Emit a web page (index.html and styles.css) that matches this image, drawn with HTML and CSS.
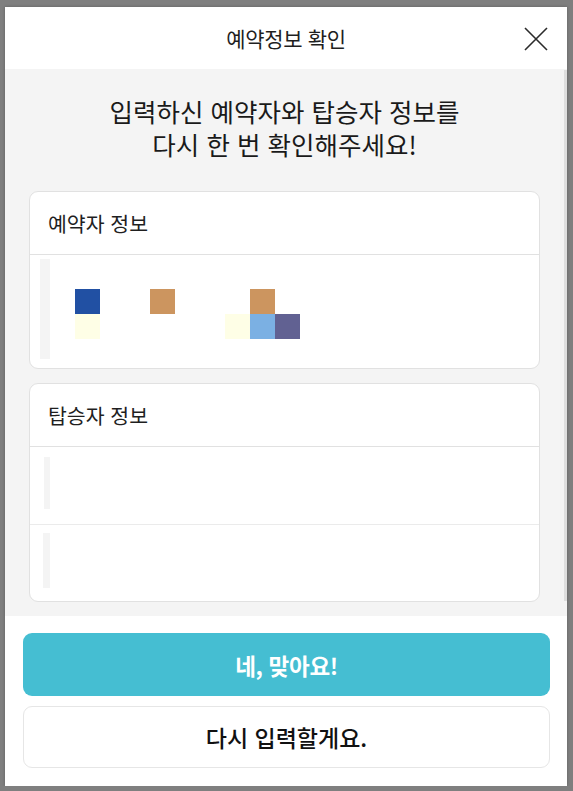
FILE: index.html
```html
<!DOCTYPE html>
<html lang="ko">
<head>
  <meta charset="utf-8">
  <link rel="stylesheet" href="styles.css">
</head>
<body>
  <div class="modal">
    <div class="modal-header">
      <h1>예약정보 확인</h1>
      <button class="close-btn" aria-label="닫기">
        <svg width="24" height="24" viewBox="0 0 24 24">
          <path d="M1 1 L23 23 M23 1 L1 23" stroke="#2b2b2b" stroke-width="1.6" fill="none"/>
        </svg>
      </button>
    </div>

    <div class="modal-body">
      <div class="scroll-area">
        <p class="notice">
          <span>입력하신 예약자와 탑승자 정보를</span>
          <span>다시 한 번 확인해주세요!</span>
        </p>

        <div class="card">
          <div class="card-title">예약자 정보</div>
          <div class="card-row booker">
            <span class="skeleton tall"></span>
            <div class="pixels">
              <i class="px blue"></i><i></i><i></i><i class="px tan"></i><i></i><i></i><i></i><i class="px tan"></i><i></i>
              <i class="px cream"></i><i></i><i></i><i></i><i></i><i></i><i class="px cream"></i><i class="px sky"></i><i class="px violet"></i>
            </div>
          </div>
        </div>

        <div class="card">
          <div class="card-title">탑승자 정보</div>
          <div class="card-row passenger">
            <span class="skeleton thin"></span>
          </div>
          <div class="card-row passenger second">
            <span class="skeleton thin wide"></span>
          </div>
        </div>
      </div>
      <div class="scrollbar"><span class="thumb"></span></div>
    </div>

    <div class="modal-footer">
      <button class="btn primary">네, 맞아요!</button>
      <button class="btn secondary">다시 입력할게요.</button>
    </div>
  </div>
</body>
</html>
```

FILE: styles.css
```css
:root {
  --overlay: #7f7f7f;
  --text: #1f1f1f;
  --panel-bg: #f4f4f4;
  --border: #e1e1e1;
  --accent: #45bed2;
}

* {
  box-sizing: border-box;
}

body {
  margin: 0;
  background-color: var(--overlay);
  font-family: "Noto Sans CJK KR", "Noto Sans", sans-serif;
  color: var(--text);
}

.modal {
  width: 562px;
  height: 779px;
  margin: 7px 0 0 5px;
  background: #fff;
  display: flex;
  flex-direction: column;
  box-shadow: 0 0 3px rgba(0, 0, 0, 0.25);
}

.modal-header {
  height: 62px;
  flex: none;
  display: flex;
  align-items: center;
  justify-content: center;
  position: relative;
}

.modal-header h1 {
  margin: 0;
  font-size: 21px;
  font-weight: 400;
  letter-spacing: -0.3px;
}

.close-btn {
  position: absolute;
  right: 19px;
  top: 20px;
  padding: 0;
  border: none;
  background: none;
  width: 24px;
  height: 24px;
  cursor: pointer;
}

.close-btn svg {
  display: block;
}

.modal-body {
  flex: 1;
  display: flex;
  background-color: var(--panel-bg);
  min-height: 0;
}

.scroll-area {
  flex: 1;
  padding: 0 24px 13px 24px;
  display: flex;
  flex-direction: column;
  gap: 14px;
}

.scrollbar {
  width: 3px;
  padding: 1px 0 15px;
}

.scrollbar .thumb {
  display: block;
  height: 100%;
  background-color: #dedede;
}

.notice {
  margin: 25px 0 17px;
  text-align: center;
  font-size: 25.5px;
  font-weight: 400;
  line-height: 33px;
  color: #1a1a1a;
}

.notice span {
  display: block;
}

.card {
  background: #fff;
  border: 1px solid var(--border);
  border-radius: 9px;
}

.card-title {
  height: 63px;
  display: flex;
  align-items: center;
  padding-left: 18px;
  font-size: 20.5px;
  font-weight: 400;
  border-bottom: 1px solid var(--border);
}

.card-row {
  display: flex;
  align-items: flex-start;
}

.card-row.booker {
  height: 113px;
  padding: 4px 0 0 10px;
}

.card-row.passenger {
  height: 77px;
  padding: 10px 0 0 14px;
}

.card-row.passenger.second {
  height: 77px;
  padding: 8px 0 0 13px;
  border-top: 1px solid #ebebeb;
}

.skeleton {
  display: block;
  background-color: var(--panel-bg);
}

.skeleton.tall {
  width: 10px;
  height: 100px;
}

.skeleton.thin {
  width: 6px;
  height: 52px;
}

.skeleton.thin.wide {
  width: 7px;
  height: 55px;
}

.pixels {
  display: grid;
  grid-template-columns: repeat(9, 25px);
  grid-auto-rows: 25px;
  margin: 30px 0 0 25px;
}

.px.blue { background-color: #2150a3; }
.px.tan { background-color: #cc955f; }
.px.cream { background-color: #fefee6; }
.px.sky { background-color: #7bb0e3; }
.px.violet { background-color: #616192; }

.modal-footer {
  flex: none;
  display: flex;
  flex-direction: column;
  gap: 10px;
  padding: 17px 17px 18px 18px;
  background: #fff;
}

.btn {
  height: 63px;
  border-radius: 9px;
  font-family: inherit;
  font-size: 22.5px;
  cursor: pointer;
}

.btn.primary {
  background-color: var(--accent);
  border: none;
  color: #fff;
  font-weight: 700;
  letter-spacing: -0.3px;
}

.btn.secondary {
  height: 62px;
  background: #fff;
  border: 1px solid #e6e6e6;
  color: #111;
  font-weight: 500;
  letter-spacing: 0;
  font-size: 23px;
}
```
